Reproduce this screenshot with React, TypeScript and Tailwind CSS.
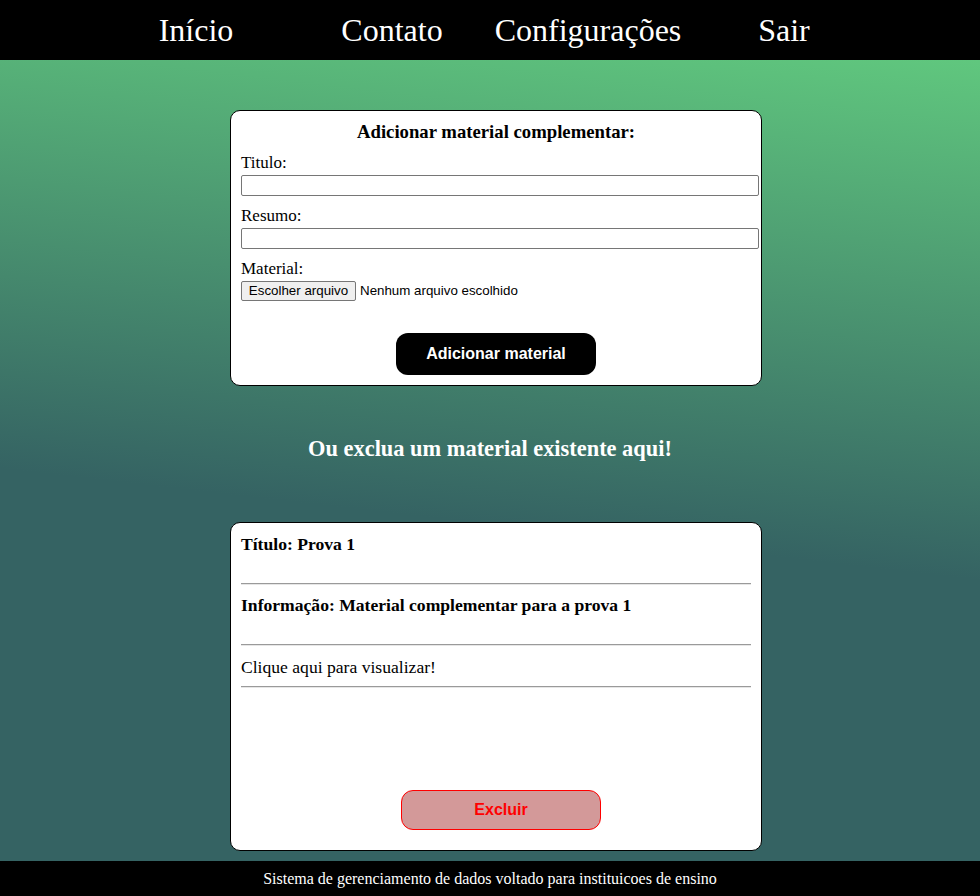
export default function App() {
  const serif = { fontFamily: '"Liberation Serif", "Times New Roman", serif' };

  return (
    <div className="min-h-[896px] flex flex-col" style={serif}>
      {/* Top nav */}
      <nav className="h-[60px] bg-black flex items-center">
        <ul className="w-[784px] mx-auto grid grid-cols-4 text-center text-white text-[32px] leading-[36px]">
          <li>Início</li>
          <li>Contato</li>
          <li>Configurações</li>
          <li>Sair</li>
        </ul>
      </nav>

      {/* Main */}
      <main className="flex-1 flex flex-col items-center pt-[50px] pb-[10px] bg-[linear-gradient(186.5deg,#60c77e_0%,#356363_57%,#356363_100%)]">
        {/* Add material card */}
        <div className="self-start ml-[230px] w-[532px] bg-white border border-black rounded-[10px] p-[10px] text-black">
          <h3 className="text-[18.72px] leading-[22px] font-bold text-center">
            Adicionar material complementar:
          </h3>
          <label className="block mt-[10px] text-[17px] leading-[20px]">Titulo:</label>
          <input
            type="text"
            className="block mt-[2px] w-[518px] h-[21px] border border-[#767676] rounded-[2px] bg-white"
          />
          <label className="block mt-[10px] text-[17px] leading-[20px]">Resumo:</label>
          <input
            type="text"
            className="block mt-[2px] w-[518px] h-[21px] border border-[#767676] rounded-[2px] bg-white"
          />
          <label className="block mt-[10px] text-[17px] leading-[20px]">Material:</label>
          <div
            className="mt-[2px] h-[20px] flex items-center text-[13.33px]"
            style={{ fontFamily: '"Liberation Sans", Arial, sans-serif' }}
          >
            <span className="h-[20px] w-[115px] flex items-center justify-center bg-[#efefef] border border-[#767676] rounded-[2px]">
              Escolher arquivo
            </span>
            <span className="ml-[4px]">Nenhum arquivo escolhido</span>
          </div>
          <div className="mt-[32px] flex justify-center">
            <button
              className="w-[200px] h-[42px] bg-black text-white rounded-[12px] text-[16px] font-bold"
              style={{ fontFamily: '"Liberation Sans", Arial, sans-serif' }}
            >
              Adicionar material
            </button>
          </div>
        </div>

        <h2 className="mt-[50px] text-white text-[22.4px] leading-[26px] font-bold">
          Ou exclua um material existente aqui!
        </h2>

        {/* Existing material card */}
        <div className="self-start ml-[230px] mt-[60px] w-[532px] bg-white border border-black rounded-[10px] px-[10px] pt-[10px] pb-[20px] text-black text-[17.6px]">
          <p className="leading-[22px] font-bold">Título: Prova 1</p>
          <hr className="mt-[28px] border-0 border-t border-b border-t-[#9a9a9a] border-b-[#e6e6e6]" />
          <p className="mt-[9px] leading-[22px] font-bold">
            Informação: Material complementar para a prova 1
          </p>
          <hr className="mt-[28px] border-0 border-t border-b border-t-[#9a9a9a] border-b-[#e6e6e6]" />
          <p className="mt-[10px] leading-[22px]">Clique aqui para visualizar!</p>
          <hr className="mt-[8px] border-0 border-t border-b border-t-[#9a9a9a] border-b-[#e6e6e6]" />
          <div className="mt-[102px] flex justify-center">
            <button
              className="ml-[10px] w-[200px] h-[40px] bg-[#d39999] border border-[#ff0000] text-[#ff0000] rounded-[12px] text-[16px] font-bold"
              style={{ fontFamily: '"Liberation Sans", Arial, sans-serif' }}
            >
              Excluir
            </button>
          </div>
        </div>
      </main>

      {/* Footer */}
      <footer className="h-[35px] bg-black text-white text-[16px] flex items-center justify-center">
        Sistema de gerenciamento de dados voltado para instituicoes de ensino
      </footer>
    </div>
  );
}
